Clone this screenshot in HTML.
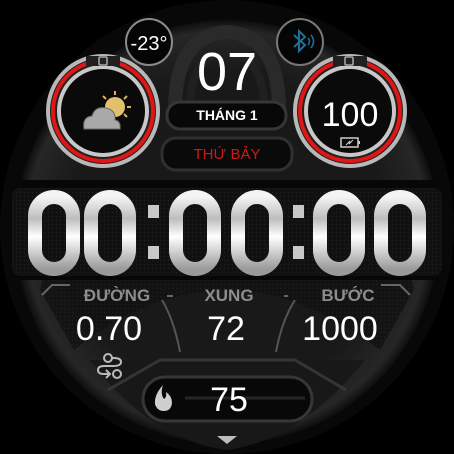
<!DOCTYPE html>
<html><head><meta charset="utf-8"><style>
html,body{margin:0;padding:0;background:#000;width:454px;height:454px;overflow:hidden}
svg{display:block}
text{font-family:"Liberation Sans","DejaVu Sans",sans-serif}
</style></head><body>
<svg width="454" height="454" viewBox="0 0 454 454" xmlns="http://www.w3.org/2000/svg">
<defs>
<radialGradient id="face" cx="50%" cy="50%" r="50%">
<stop offset="0.75" stop-color="#191919"/><stop offset="0.95" stop-color="#262626"/><stop offset="1" stop-color="#0e0e0e"/>
</radialGradient>
<linearGradient id="dig" x1="0" y1="0" x2="0" y2="1">
<stop offset="0" stop-color="#f4f4f4"/><stop offset="0.3" stop-color="#bdbdbd"/><stop offset="0.55" stop-color="#ffffff"/><stop offset="1" stop-color="#9a9a9a"/>
</linearGradient>
<pattern id="dots" width="4" height="4" patternUnits="userSpaceOnUse"><rect width="4" height="4" fill="#111"/><rect width="1" height="1" fill="#222"/></pattern>
</defs>
<circle cx="227" cy="227" r="227" fill="#080808"/>
<circle cx="227" cy="232" r="212" fill="url(#face)"/>
<path d="M40 290 Q60 190 227 180 Q394 190 414 290 L380 350 Q300 290 227 290 Q150 290 74 350Z" fill="url(#dots)" opacity="0.8"/>
<path d="M90 360 L160 360 L175 355 L280 355 L295 360 L365 360 Q300 440 227 450 Q150 440 90 360Z" fill="#181818"/>
<path d="M108 390 L160 360 L295 360 L346 390" fill="none" stroke="#353535" stroke-width="3"/>
<rect x="10" y="180" width="434" height="100" fill="#070707"/>
<rect x="12" y="188" width="430" height="88" rx="8" fill="url(#dots)"/>
<path d="M175 110 Q175 35 227 32 Q279 35 279 110" fill="none" stroke="#2a2a2a" stroke-width="14"/>
<path d="M190 110 Q190 55 227 52 Q264 55 264 110" fill="none" stroke="#202020" stroke-width="8"/>
<circle cx="149" cy="42" r="23" fill="#050505" stroke="#8a8a8a" stroke-width="2"/>
<text x="149" y="50" font-size="20" fill="#fff" text-anchor="middle">-23°</text>
<circle cx="300" cy="42" r="23" fill="#050505" stroke="#777" stroke-width="2"/>
<path d="M294 35 L305 45 L299 51 L299 31 L305 37 L294 47" fill="none" stroke="#1f6f9a" stroke-width="2"/>
<path d="M308 38 Q311 41 308 45 M311 35 Q316 41 311 48" fill="none" stroke="#1f6f9a" stroke-width="1.6"/>
<text x="227" y="90" font-size="54" fill="#fff" text-anchor="middle">07</text>
<rect x="167" y="102" width="119" height="27" rx="13" fill="#080808" stroke="#363636" stroke-width="3"/>
<text x="227" y="120" font-size="14" font-weight="bold" fill="#fff" text-anchor="middle">THÁNG 1</text>
<rect x="162" y="138" width="130" height="32" rx="14" fill="#0a0a0a" stroke="#303030" stroke-width="3"/>
<text x="227" y="159" font-size="15" fill="#d01818" text-anchor="middle">THỨ BẢY</text>
<g>
<circle cx="103" cy="111" r="55" fill="#202020" stroke="#b8b8b8" stroke-width="4"/>
<circle cx="103" cy="111" r="50" fill="none" stroke="#e01515" stroke-width="4"/>
<circle cx="103" cy="111" r="44" fill="#0a0a0a" stroke="#c8c8c8" stroke-width="4"/>
<rect x="86" y="56" width="34" height="10" fill="#202020"/>
<rect x="99" y="57" width="8" height="8" rx="1" fill="#222" stroke="#aaa" stroke-width="1.5"/>
<circle cx="115" cy="107" r="10" fill="#e3c06b"/>
<g stroke="#d9b25a" stroke-width="2"><line x1="115" y1="91" x2="115" y2="95"/><line x1="127" y1="96" x2="124" y2="99"/><line x1="131" y1="107" x2="127" y2="107"/><line x1="127" y1="117" x2="124" y2="114"/><line x1="103" y1="96" x2="106" y2="99"/></g>
<path d="M84 129 Q82 117 92 116 Q95 106 106 108 Q116 110 115 120 Q121 121 120 129Z" fill="#a9a9a9" stroke="#6a6a6a" stroke-width="1"/>
</g>
<g>
<circle cx="350" cy="111" r="55" fill="#202020" stroke="#b8b8b8" stroke-width="4"/>
<circle cx="350" cy="111" r="50" fill="none" stroke="#e01515" stroke-width="4"/>
<circle cx="350" cy="111" r="44" fill="#0a0a0a" stroke="#c8c8c8" stroke-width="4"/>
<rect x="333" y="56" width="34" height="10" fill="#202020"/>
<rect x="345" y="57" width="8" height="8" rx="1" fill="#222" stroke="#aaa" stroke-width="1.5"/>
<text x="350" y="126" font-size="34" fill="#fff" text-anchor="middle">100</text>
<rect x="341" y="138" width="17" height="9" fill="none" stroke="#ccc" stroke-width="1.5"/>
<rect x="358" y="141" width="2" height="3" fill="#ccc"/>
<path d="M346 145 L350 141 L349 144 L353 140" stroke="#ccc" stroke-width="1" fill="none"/>
</g>
<g fill="none" stroke="url(#dig)" stroke-width="14">
<rect x="35" y="197" width="38" height="72" rx="19"/>
<rect x="91" y="197" width="38" height="72" rx="19"/>
<rect x="176" y="197" width="38" height="72" rx="19"/>
<rect x="238" y="197" width="38" height="72" rx="19"/>
<rect x="320" y="197" width="38" height="72" rx="19"/>
<rect x="381" y="197" width="38" height="72" rx="19"/>
</g>
<g fill="#c8c8c8">
<rect x="148" y="205" width="11" height="13"/><rect x="148" y="246" width="11" height="13"/>
<rect x="293" y="205" width="11" height="13"/><rect x="293" y="246" width="11" height="13"/>
</g>
<path d="M42 295 L52 285 L70 285 M167 296 L173 296 M381 285 L400 285 L410 295 M284 296 L288 296" stroke="#666" stroke-width="2" fill="none"/>
<path d="M162 300 Q174 320 180 352 M295 300 Q282 320 276 352" stroke="#555" stroke-width="2" fill="none"/>
<g font-size="17" font-weight="bold" fill="#8d8d8d" text-anchor="middle">
<text x="117" y="301">ĐƯỜNG</text><text x="229" y="301">XUNG</text><text x="348" y="301">BƯỚC</text>
</g>
<g font-size="34" fill="#fff" text-anchor="middle">
<text x="109" y="340">0.70</text><text x="226" y="340">72</text><text x="340" y="340">1000</text>
</g>
<g fill="none" stroke="#bbb" stroke-width="2">
<circle cx="108" cy="358" r="4"/><circle cx="117" cy="374" r="4"/>
<path d="M112 358 L114 358 Q121 358 121 362 Q121 366 113 366 L104 366 Q98 366 98 370 Q98 374 104 374 L110 374"/>
<path d="M106 370 L110 374 L106 378"/>
</g>
<rect x="143" y="377" width="169" height="44" rx="22" fill="#080808" stroke="#363636" stroke-width="3"/>
<line x1="185" y1="398" x2="305" y2="398" stroke="#262626" stroke-width="3"/>
<path d="M163 385 Q154 395 155 404 Q157 411 164 411 Q171 411 172 403 Q172 396 166 392 Q167 397 164 399 Q160 394 163 385Z" fill="#cfcfcf"/>
<text x="229" y="411" font-size="34" fill="#fff" text-anchor="middle">75</text>
<path d="M217 436 L237 436 L227 444Z" fill="#bdbdbd"/>
</svg>
</body></html>
